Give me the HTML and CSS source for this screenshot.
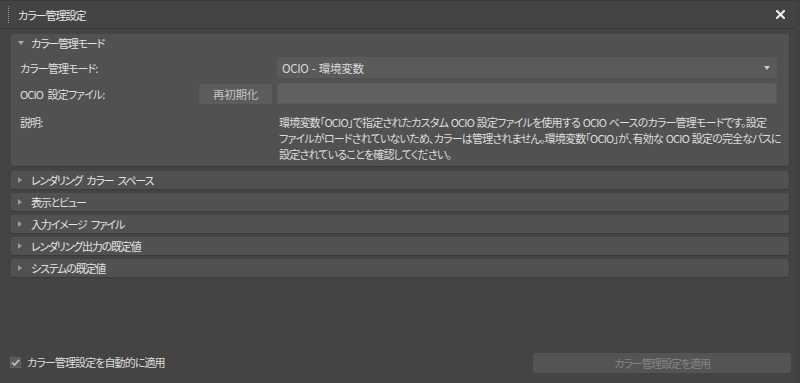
FILE: index.html
```html
<!DOCTYPE html>
<html lang="ja">
<head>
<meta charset="utf-8">
<title>カラー管理設定</title>
<link rel="stylesheet" href="styles.css">
</head>
<body>
<div class="window">
  <header class="titlebar">
    <span class="grip"></span>
    <span class="title">カラー管理設定</span>
    <button class="close" aria-label="閉じる">
      <svg width="9" height="9" viewBox="0 0 9 9"><path d="M1 1 L8 8 M8 1 L1 8" stroke="#f2f2f2" stroke-width="2" stroke-linecap="square" fill="none"/></svg>
    </button>
  </header>

  <main class="content">
    <section class="panel open">
      <div class="panel-head"><span class="tri down"></span><span>カラー管理モード</span></div>
      <div class="panel-body">
        <div class="row">
          <span class="label">カラー管理モード:</span>
          <div class="select"><span>OCIO - 環境変数</span><span class="sel-arrow"></span></div>
        </div>
        <div class="row">
          <span class="label">OCIO 設定ファイル:</span>
          <button class="btn">再初期化</button>
          <div class="input"></div>
        </div>
        <div class="row desc-row">
          <span class="label">説明:</span>
          <p class="desc">環境変数「OCIO」で指定されたカスタム OCIO 設定ファイルを使用する OCIO ベースのカラー管理モードです。設定<br>ファイルがロードされていないため、カラーは管理されません。環境変数「OCIO」が、有効な OCIO 設定の完全なパスに<br>設定されていることを確認してください。</p>
        </div>
      </div>
    </section>

    <section class="panel"><div class="panel-head"><span class="tri right"></span><span>レンダリング カラー スペース</span></div></section>
    <section class="panel"><div class="panel-head"><span class="tri right"></span><span>表示とビュー</span></div></section>
    <section class="panel"><div class="panel-head"><span class="tri right"></span><span>入力イメージ ファイル</span></div></section>
    <section class="panel"><div class="panel-head"><span class="tri right"></span><span>レンダリング出力の既定値</span></div></section>
    <section class="panel"><div class="panel-head"><span class="tri right"></span><span>システムの既定値</span></div></section>
  </main>

  <footer class="footer">
    <label class="check">
      <span class="box">
        <svg width="9" height="9" viewBox="0 0 9 9"><path d="M1.2 4.6 L3.6 7 L8 1.8" stroke="#bdbdbd" stroke-width="1.8" fill="none"/></svg>
      </span>
      <span>カラー管理設定を自動的に適用</span>
    </label>
    <button class="apply" disabled>カラー管理設定を適用</button>
  </footer>
</div>
</body>
</html>
```

FILE: styles.css
```css
* { box-sizing: border-box; }
html, body {
  margin: 0;
  padding: 0;
  width: 800px;
  height: 383px;
  overflow: hidden;
  background: #444444;
}
body {
  font-family: "Noto Sans CJK JP", "Noto Sans", sans-serif;
  font-size: 11px;
  letter-spacing: -0.7px;
  word-spacing: 1.5px;
  color: #dcdcdc;
  font-feature-settings: "palt" 1;
  font-variant-east-asian: proportional-width;
}
button {
  font-family: inherit;
  font-size: inherit;
  letter-spacing: inherit;
  word-spacing: inherit;
  font-feature-settings: inherit;
  font-variant-east-asian: inherit;
}
.window {
  width: 800px;
  height: 383px;
  display: flex;
  flex-direction: column;
  border-top: 1px solid #3b3b3b;
  border-right: 5px solid #414141;
}
.titlebar {
  height: 28px;
  display: flex;
  align-items: center;
  border-bottom: 1px solid #363636;
  padding-left: 8px;
  flex: none;
}
.grip {
  width: 1px;
  height: 17px;
  border-left: 1px dotted #9a9a9a;
  margin-right: 9px;
}
.title {
  color: #e8e8e8;
  letter-spacing: -1px;
}
.close {
  margin-left: auto;
  margin-right: 10px;
  background: none;
  border: 0;
  padding: 0;
  width: 9px;
  height: 9px;
  display: flex;
}
.content {
  flex: 1;
  padding: 5px 6px 0 11px;
  display: flex;
  flex-direction: column;
  gap: 4px;
}
.panel {
  background: #515151;
  border-radius: 2px;
  box-shadow: 0 1px 0 #3a3a3a, 1px 0 0 #3c3c3c;
}
.panel.open { margin-bottom: 1px; }
.panel-head {
  height: 18px;
  display: flex;
  align-items: center;
  padding-left: 7px;
  color: #e4e4e4;
  letter-spacing: -1.2px;
  word-spacing: 3px;
}
.tri {
  width: 0;
  height: 0;
  margin-right: 7px;
}
.tri.down {
  border-left: 3.5px solid transparent;
  border-right: 3.5px solid transparent;
  border-top: 4px solid #a8a8a8;
}
.tri.right {
  border-top: 3.5px solid transparent;
  border-bottom: 3.5px solid transparent;
  border-left: 4px solid #9a9a9a;
  margin-right: 9px;
}
.panel-body {
  padding: 5px 12px 4px 9px;
  display: flex;
  flex-direction: column;
  gap: 5px;
}
.row {
  display: grid;
  grid-template-columns: 179px 78px 500px;
  align-items: center;
  height: 21px;
}
.label {
  grid-column: 1;
  color: #dedede;
  letter-spacing: -0.9px;
  word-spacing: 3px;
}
.select, .input {
  grid-column: 3;
  height: 21px;
}
.select {
  background: #5a5a5a;
  border-radius: 2px;
  display: flex;
  align-items: center;
  justify-content: space-between;
  padding: 0 7px 0 5px;
  color: #dadada;
  font-size: 11.5px;
  letter-spacing: -0.3px;
  word-spacing: 1px;
}
.sel-arrow {
  width: 0;
  height: 0;
  border-left: 3.5px solid transparent;
  border-right: 3.5px solid transparent;
  border-top: 4px solid #c8c8c8;
}
.input {
  background: #606060;
  border-radius: 2px;
  box-shadow: inset 0 0 0 1px #5a5a5a;
}
.btn {
  grid-column: 2;
  width: 73px;
  height: 20px;
  background: #5c5c5c;
  border: 0;
  border-radius: 3px;
  color: #c4c4c4;
  padding: 0;
  font-size: 11.5px;
  letter-spacing: -0.3px;
}
.desc-row {
  height: auto;
  align-items: start;
  margin-top: 5px;
}
.desc-row .label { line-height: 16px; }
.desc {
  grid-column: 3;
  grid-row: 1;
  margin: 0 0 0 2px;
  line-height: 16px;
  white-space: nowrap;
  color: #dedede;
  letter-spacing: -0.8px;
  word-spacing: 1px;
}
.footer {
  flex: none;
  height: 31px;
  display: flex;
  align-items: flex-start;
  padding: 1px 4px 0 10px;
  justify-content: space-between;
}
.check {
  display: flex;
  align-items: center;
  gap: 6px;
  margin-top: 1px;
  color: #dedede;
  letter-spacing: -0.9px;
}
.box {
  width: 11px;
  height: 11px;
  background: #5a5a5a;
  border: 1px solid #626262;
  display: flex;
  align-items: center;
  justify-content: center;
}
.apply {
  width: 258px;
  height: 20px;
  background: #545454;
  border: 0;
  border-radius: 3px;
  color: #858585;
  padding: 0;
  letter-spacing: -1.1px;
}
```
